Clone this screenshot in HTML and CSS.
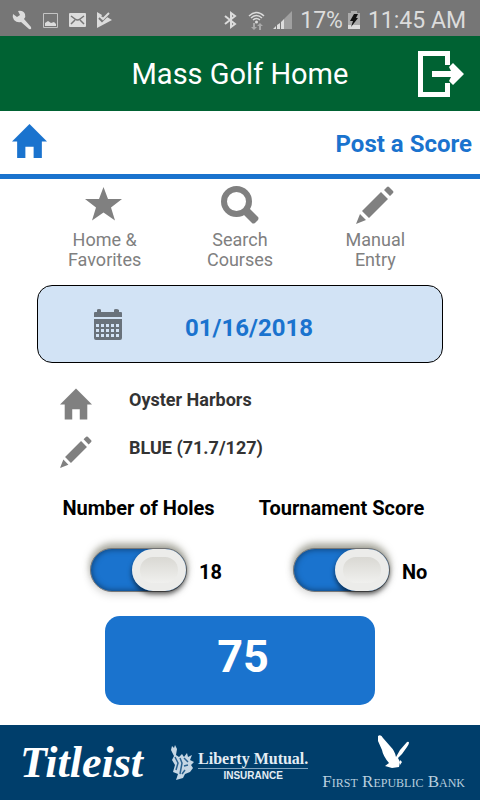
FILE: index.html
```html
<!DOCTYPE html>
<html lang="en">
<head>
    <meta charset="utf-8">
    <meta name="viewport" content="width=device-width, initial-scale=1">
    <title>Mass Golf Home</title>
    <link rel="stylesheet" href="styles.css">
</head>
<body>
    <!-- Shared icons -->
    <svg class="icon-defs" aria-hidden="true">
        <symbol id="home" viewBox="0 0 34 33">
            <path d="M17 0 34 17H29V33H21V22H13V33H5V17H0Z"/>
        </symbol>
        <symbol id="pencil" viewBox="0 0 38 38">
            <path d="M0 38 4 28 10 34ZM6 25 25 6 32 13 13 32ZM28 4 31 1Q32 0 33 1L37 5Q38 6 37 7L34 10Z"/>
        </symbol>
    </svg>

    <div class="status-bar">
        <div class="status-group status-left">
            <svg width="20" height="20" viewBox="0 0 20 20"><path d="M1 4 5 7 8 5 6 1Q11 0 13 4 14 7 12 9L19 17Q20 20 17 19L9 12Q5 13 2 10 0 7 1 4Z"/></svg>
            <svg width="15" height="15" viewBox="0 0 15 15"><path fill="none" stroke="#c4c4c4" d="M.5.5h14v14H.5z"/><path d="M2 13V10L5 8 8 10 11 9 13 11V13Z"/></svg>
            <svg width="17" height="14" viewBox="0 0 17 14"><rect width="17" height="14" rx="1"/><path fill="none" stroke="#767676" stroke-width="1.500" d="M2 3 6 6Q8.500 8 11 6L15 3M2 11 6 7M15 11 11 7"/></svg>
            <svg width="15" height="16" viewBox="0 0 15 16"><path d="M0 0 5 3 4 5 6 7 11 3 10 5 15 8 0 16Z"/><path fill="none" stroke="#767676" stroke-width="2" d="M2 6 5 9 11 3"/><path fill="none" stroke="#dcdcdc" stroke-width="2" d="M4 5 6 7 12 1"/></svg>
        </div>
        <div class="status-group">
            <svg width="13" height="18" viewBox="0 0 13 18"><path fill="none" stroke="#dcdcdc" stroke-width="2" d="M1 5 11 13 7 16V2L11 5 1 13"/></svg>
            <svg class="wifi" width="17" height="19" viewBox="0 0 17 19"><g fill="none" stroke="#dcdcdc" stroke-width="1.500"><path d="M1 5Q8.500-2 16 5M3 7Q8.500 2 14 7M5 9Q8.500 6 12 9"/></g><circle cx="8.500" cy="11" r="1.500"/><path fill="#aaa" d="M5 12V16H3L6 19 9 16H7V12ZM11 19V15H9L12 12 15 15H13V19Z"/></svg>
            <svg width="19" height="18" viewBox="0 0 19 18"><path fill="#a0a0a0" d="M19 0V18H11V8Z"/><path d="M0 18 3 15V18ZM4 14 7 12V18H4ZM8 11 11 8V18H8Z"/></svg>
            <span>17%</span>
            <svg class="battery" width="12" height="18" viewBox="0 0 12 18"><path fill="#aaa" d="M0 2H3V0H9V2H12V14H0Z"/><path d="M0 14H12V18H0Z"/><path fill="#111" d="M6 3H10L8 7H10L3 16 5 10H2Z"/></svg>
            <span>11:45 AM</span>
        </div>
    </div>

    <header class="app-header">
        <h1>Mass Golf Home</h1>
        <button class="logout" aria-label="Log out">
            <svg width="46" height="46" viewBox="0 0 46 46"><path fill="none" stroke="#fff" stroke-width="5" d="M29.500 14V2.500H2.500V43.500H29.500V32"/><path fill="#fff" d="M14 20H33L31 16 35 12 46 23 35 34 31 30 33 26H14Z"/></svg>
        </button>
    </header>

    <nav class="page-bar">
        <a href="#" aria-label="Home"><svg width="35" height="34"><use href="#home"/></svg></a>
        <h2>Post a Score</h2>
    </nav>

    <main>
        <nav class="tabs">
            <a href="#">
                <svg width="38" height="38" viewBox="0 0 38 38"><path d="M17.500 1 22 13H36L25 21.500 29 34.500 17.500 26.500 6 34.500 10 21.500-1 13H13Z"/></svg>
                Home &amp;<br>Favorites
            </a>
            <a href="#">
                <svg width="38" height="38" viewBox="0 0 38 38"><circle cx="15.500" cy="15.500" r="12.500" fill="none" stroke="#808080" stroke-width="6"/><path d="M21 27 27 21 37 31Q38 32 37 34L34 37Q32 38 31 37Z"/></svg>
                Search<br>Courses
            </a>
            <a href="#">
                <svg width="38" height="38"><use href="#pencil"/></svg>
                Manual<br>Entry
            </a>
        </nav>

        <div class="date-box">
            <label for="playDate" aria-label="Date played">
                <svg width="28" height="31" viewBox="0 0 28 31">
                    <path d="M0 8V4Q0 3 1 3H3V1Q3 0 5 0T7 1V3H20V1Q20 0 22 0T25 1V3H27Q28 3 28 4V8ZM0 10H28V29Q28 31 26 31H2Q0 31 0 29Z"/>
                    <path stroke="#d2e3f5" stroke-width="3" stroke-dasharray="3 2" d="M2 16.500H25M2 21.500H25M2 26.500H25"/>
                </svg>
            </label>
            <input type="text" id="playDate" value="01/16/2018">
        </div>

        <div class="course">
            <svg width="32" height="32"><use href="#home"/></svg>
            <span>Oyster Harbors</span>
            <svg width="32" height="32"><use href="#pencil"/></svg>
            <span>BLUE (71.7/127)</span>
        </div>

        <div class="switches">
            <div class="switch-group">
                <label for="holes">Number of Holes</label>
                <div class="switch-row">
                    <input type="checkbox" class="switch" id="holes" checked>
                    <span>18</span>
                </div>
            </div>
            <div class="switch-group">
                <label for="tournament">Tournament Score</label>
                <div class="switch-row">
                    <input type="checkbox" class="switch" id="tournament" checked>
                    <span>No</span>
                </div>
            </div>
        </div>

        <button class="score">75</button>
    </main>

    <footer class="sponsors">
        <div class="titleist">Titleist</div>
        <div class="liberty">
            <svg width="24" height="36" viewBox="0 0 24 36"><path d="M1 1 3 3 4 0 6 4 5 10 8 12 11 9 13 12 16 8 17 12 21 10 19 15 23 17 20 20 22 23 19 27 14 29 12 33 5 35 7 29 2 27 4 20 1 15 3 11 0 5Z"/><path fill="none" stroke="#2a6290" stroke-width="1.500" d="M4 12 7 18 5 25M9 13 11 18 9 29M13 13 17 17M13 21 17 20M14 25 11 29"/></svg>
            <div class="liberty-name">
                <span>Liberty Mutual.</span>
                <small>INSURANCE</small>
            </div>
        </div>
        <div class="republic">
            <svg width="32" height="34" viewBox="0 0 32 34"><path d="M0 1Q3-1 5 3L12 11Q17 16 18 22L22 15 29 7Q33 6 29 12L24 19 20 23 22 27 21 32 14 33 7 31 11 28Q5 21 4 15L0 6Z"/><path d="M22 25 24 27 22 30Z"/></svg>
            <span>First Republic Bank</span>
        </div>
    </footer>
</body>
</html>
```

FILE: styles.css
```css
*, *::before {
    box-sizing: border-box;
}
body {
    margin: 0;
    min-height: 100vh;
    display: flex;
    flex-direction: column;
    background-color: #fff;
    font-family: Roboto, "Liberation Sans", sans-serif;
}
svg {
    display: block;
    flex: none;
}
h1, h2 {
    margin: 0;
}
a {
    text-decoration: none;
}
button, input {
    font-family: inherit;
    margin: 0;
}
.icon-defs {
    position: absolute;
    width: 0;
    height: 0;
}

/* Phone status bar */
.status-bar {
    height: 36px;
    padding: 4px 14px 0 12px;
    display: flex;
    justify-content: space-between;
    align-items: center;
    background-color: #767676;
    color: #dcdcdc;
    fill: #dcdcdc;
    font-size: 23px;
}
.status-group {
    display: flex;
    align-items: center;
    gap: 8px;
}
.status-left {
    gap: 11px;
}
.wifi {
    margin-left: 3px;
}
.battery {
    margin-left: -3px;
}

.app-header {
    height: 75px;
    padding: 0 16px;
    display: grid;
    grid-template-columns: 46px 1fr 46px;
    align-items: center;
    background-color: #006233;
    color: #fff;
}
.app-header h1 {
    grid-column: 2;
    font-size: 29px;
    font-weight: 400;
    text-align: center;
}
.logout {
    padding: 0;
    border: 0;
    background: none;
}

.page-bar {
    height: 68px;
    padding: 0 8px 3px 12px;
    display: flex;
    justify-content: space-between;
    align-items: center;
    border-bottom: 5px solid #1a73ce;
    color: #1a73ce;
    fill: #1a73ce;
}
.page-bar h2 {
    font-size: 24px;
    font-weight: 700;
    padding-top: 5px;
}

main {
    flex: 1;
    display: flex;
    flex-direction: column;
    padding: 7px 37px 20px;
}
.tabs {
    display: grid;
    grid-template-columns: repeat(3, 1fr);
}
.tabs a {
    color: #808080;
    fill: #808080;
    font-size: 18px;
    line-height: 20px;
    text-align: center;
}
.tabs svg {
    margin: 0 auto 6px;
    overflow: visible;
}

.date-box {
    height: 78px;
    margin-top: 15px;
    padding: 0 56px;
    display: flex;
    align-items: center;
    border: 1px solid #000;
    border-radius: 15px;
    background-color: #d2e3f5;
    fill: #69727b;
}
.date-box input {
    width: 254px;
    padding: 8px 0 0;
    border: 0;
    background: none;
    color: #1a73ce;
    font-size: 24px;
    font-weight: 700;
    text-align: center;
}

.course {
    margin: 25px 0 0 23px;
    display: grid;
    grid-template-columns: 32px 1fr;
    column-gap: 37px;
    row-gap: 16px;
    fill: #808080;
    color: #333;
    font-size: 18px;
    font-weight: 700;
}
.course span {
    line-height: 24px;
}

.switches {
    margin-top: 27px;
    display: grid;
    grid-template-columns: repeat(2, 1fr);
    color: #000;
    font-size: 20px;
    font-weight: 700;
}
.switch-group {
    text-align: center;
    line-height: 26px;
}
.switch-row {
    display: flex;
    align-items: center;
    gap: 12px;
    margin-top: 27px;
    padding-left: 53px;
}
.switch-row span {
    padding-top: 4px;
}
.switch {
    appearance: none;
    width: 97px;
    height: 44px;
    display: flex;
    border: 1px solid #777;
    border-radius: 22px;
    background-color: #1a73ce;
    box-shadow: 0 -5px 7px rgba(90, 90, 70, .5), 0 3px 8px rgba(0, 0, 0, .15), inset 0 0 6px rgba(0, 0, 0, .5);
}
.switch::before {
    content: "";
    width: 54px;
    height: 42px;
    border: 8px solid #ececea;
    border-radius: 22px;
    background: linear-gradient(#d9d8d3, #f0f0ee);
    box-shadow: 0 3px 5px rgba(0, 0, 0, .6);
}
.switch:checked::before {
    margin-left: auto;
}

.score {
    width: 270px;
    height: 89px;
    margin: 24px auto 0;
    padding: 0 0 8px 6px;
    border: 0;
    border-radius: 15px;
    background-color: #1a73ce;
    color: #fff;
    font-size: 45px;
    font-weight: 700;
}

/* Sponsor logos */
.sponsors {
    height: 75px;
    padding: 0 15px 0 20px;
    display: flex;
    justify-content: space-between;
    align-items: center;
    background-color: #003e6b;
    color: #fff;
    fill: #fff;
    font-family: "Liberation Serif", serif;
}
.titleist {
    font-size: 44px;
    font-style: italic;
    font-weight: 700;
}
.liberty {
    padding-left: 14px;
    display: flex;
    align-items: center;
    gap: 3px;
    color: #e4edf4;
    fill: #c5d7e5;
}
.liberty-name {
    padding-top: 6px;
    display: flex;
    flex-direction: column;
    text-align: center;
    font-weight: 700;
}
.liberty-name span {
    font-size: 16px;
    line-height: 18px;
    border-bottom: 1px solid #7fa3bf;
}
.liberty-name small {
    font-family: "Liberation Sans", sans-serif;
    font-size: 10px;
    line-height: 13px;
}
.republic {
    text-align: center;
    color: #b9cfdf;
}
.republic svg {
    margin: 0 auto 4px;
}
.republic span {
    display: block;
    font-size: 17px;
    line-height: 18px;
    font-variant: small-caps;
}
```
